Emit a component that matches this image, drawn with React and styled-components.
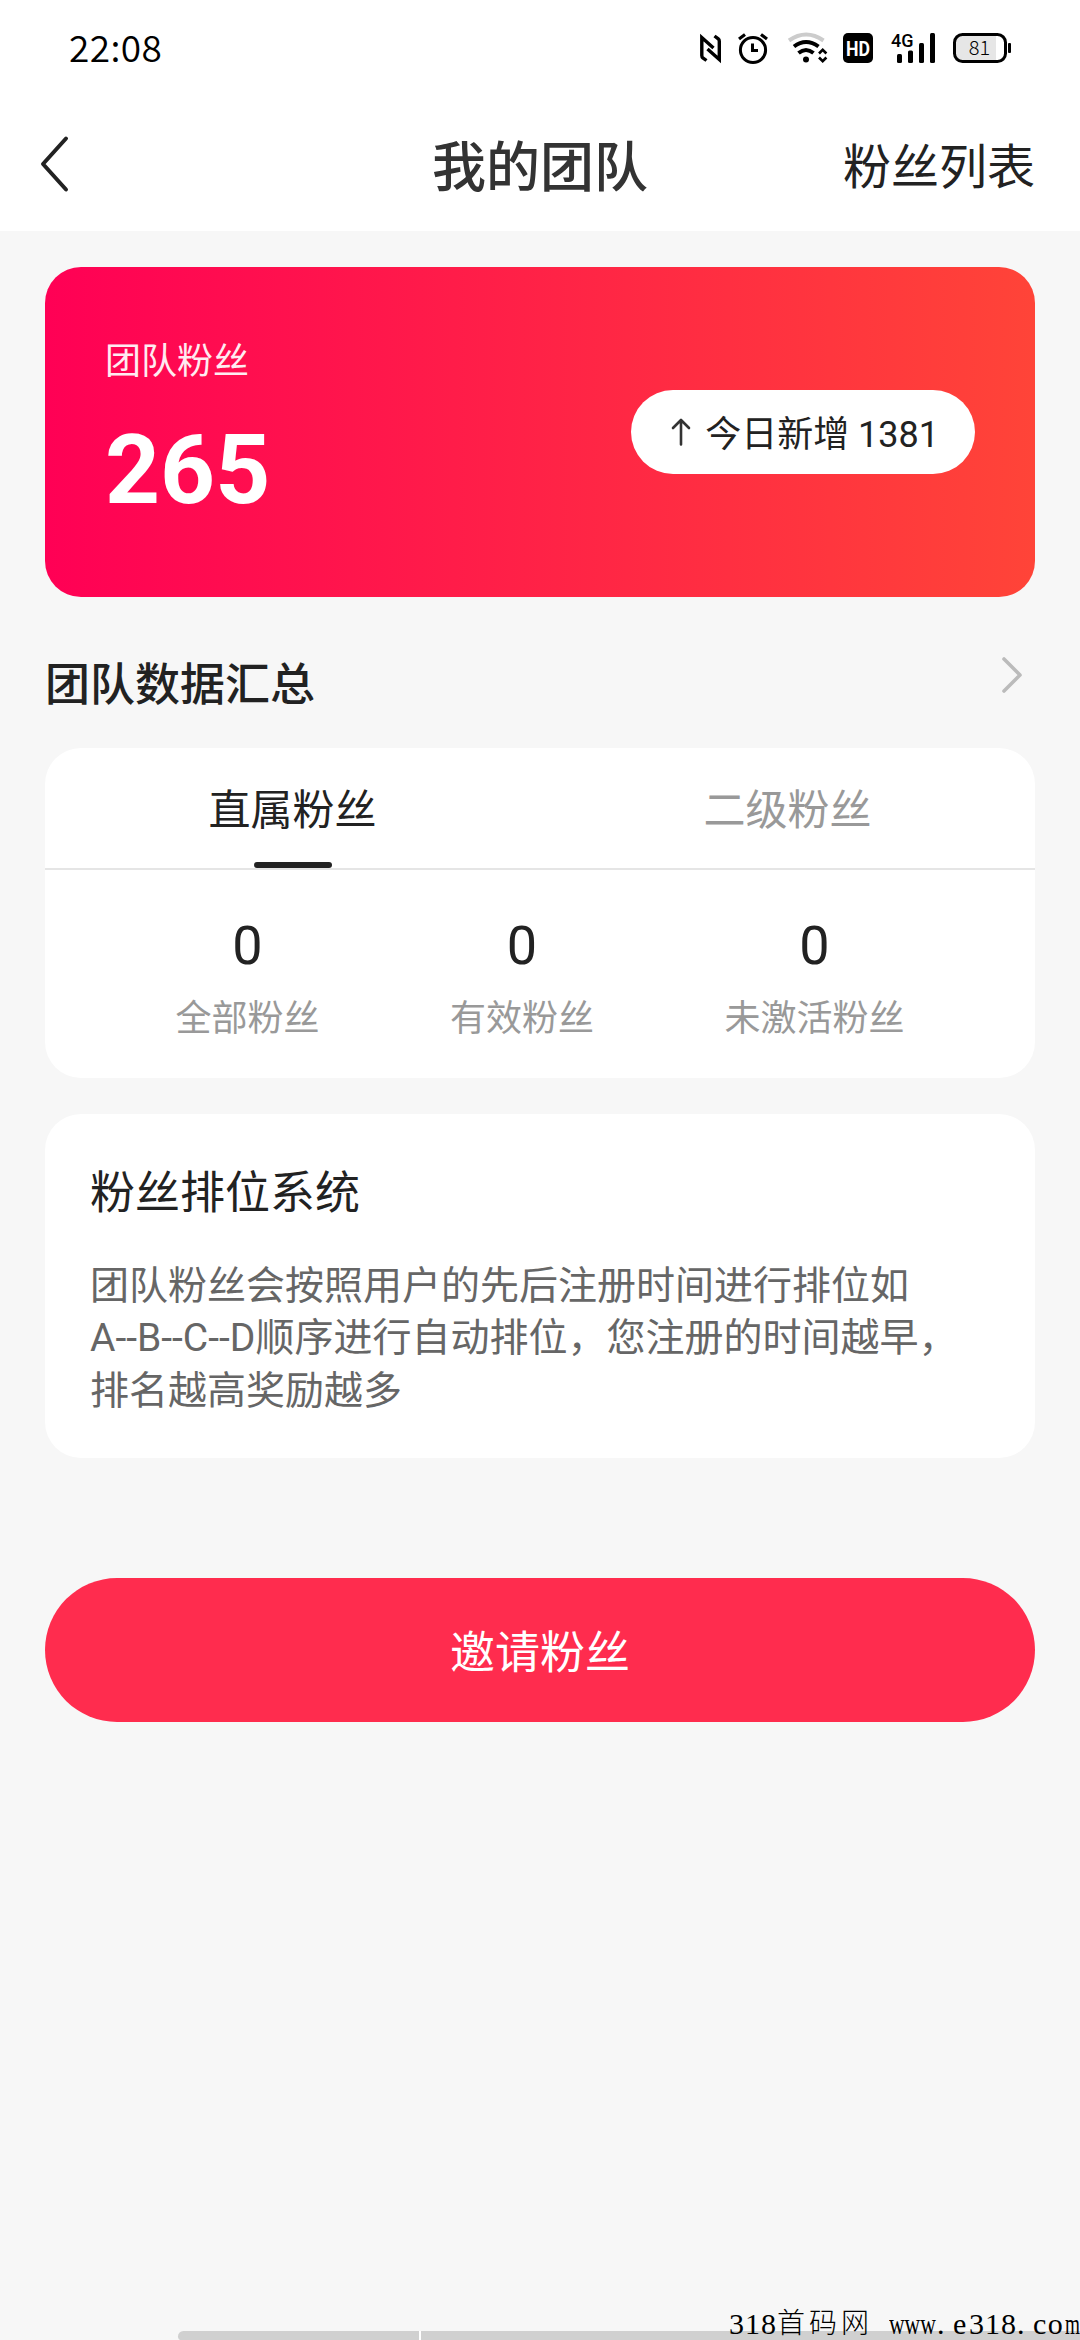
import React from 'react';
import styled, { createGlobalStyle } from 'styled-components';

const GlobalStyle = createGlobalStyle`
  * { box-sizing: border-box; }
  html, body { margin: 0; padding: 0; background: #f7f7f7; }
  body { font-family: Roboto, 'Noto Sans CJK SC', sans-serif; color: #222; }
`;

const Screen = styled.main`
  position: relative;
  width: 1080px;
  height: 2340px;
  overflow: hidden;
  background: #f7f7f7;
`;

const Header = styled.header`
  height: 231px;
  background: #fff;
`;

const StatusBar = styled.div`
  height: 99px;
  padding: 0 63px 3px 69px;
  display: flex;
  align-items: center;
  justify-content: space-between;
  color: #000;
`;

const Clock = styled.span`
  margin-bottom: 5px;
  font: 350 37px/48px 'Noto Sans CJK SC', sans-serif;
  letter-spacing: 0.4px;
`;

const StatusIcons = styled.svg`
  display: block;
  width: 320px;
  height: 40px;
`;

const NavBar = styled.nav`
  height: 132px;
  padding: 6px 45px 0 40px;
  display: grid;
  grid-template-columns: 200px 1fr 195px;
  align-items: center;
`;

const BackIcon = styled.svg`
  display: block;
  width: 30px;
  height: 58px;
  margin-bottom: 8px;
`;

const PageTitle = styled.h1`
  margin: 0;
  padding-top: 1px;
  font-size: 54px;
  line-height: 64px;
  font-weight: 500;
  color: #333;
  text-align: center;
`;

const NavLink = styled.span`
  font-size: 48px;
  line-height: 60px;
  text-align: right;
  white-space: nowrap;
`;

const Content = styled.div`
  padding: 36px 45px 0;
`;

const Hero = styled.section`
  height: 330px;
  padding: 0 60px;
  border-radius: 36px;
  background: linear-gradient(90deg, #ff0055, #ff4438);
  display: flex;
  align-items: center;
  justify-content: space-between;
`;

const HeroStat = styled.div`
  align-self: flex-start;
  margin-top: 71px;
  display: flex;
  flex-direction: column;
  gap: 36px;
  color: #fff;
`;

const HeroLabel = styled.span`
  font-size: 36px;
  line-height: 48px;
  opacity: 0.92;
`;

const HeroNumber = styled.strong`
  font-size: 96px;
  line-height: 96px;
  font-weight: 700;
`;

const TodayPill = styled.div`
  width: 344px;
  height: 84px;
  padding: 5px 36px 0 38px;
  border-radius: 42px;
  background: #fff;
  display: flex;
  align-items: center;
  justify-content: space-between;
  font-size: 36px;
  line-height: 48px;
  white-space: nowrap;
`;

const ArrowIcon = styled.svg`
  display: block;
  width: 24px;
  height: 30px;
  margin-bottom: 6px;
`;

const SectionHeader = styled.div`
  height: 151px;
  padding: 5px 11px 0 0;
  display: flex;
  align-items: center;
  justify-content: space-between;
`;

const SectionTitle = styled.h2`
  margin: 0;
  padding-top: 22px;
  font-size: 45px;
  line-height: 56px;
  font-weight: 500;
`;

const ChevronIcon = styled.svg`
  display: block;
  width: 24px;
  height: 40px;
`;

const Card = styled.section`
  height: ${({ $height }) => $height}px;
  border-radius: 36px;
  background: #fff;
`;

const Tabs = styled.div`
  height: 122px;
  display: flex;
  border-bottom: 2px solid #e5e5e5;
`;

const Tab = styled.div`
  flex: 1;
  display: flex;
  flex-direction: column;
  align-items: center;
  color: ${({ $active }) => ($active ? '#222' : '#999')};

  &::after {
    content: '';
    width: 78px;
    height: 6px;
    border-radius: 3px;
    background: ${({ $active }) => ($active ? '#222' : 'transparent')};
  }
`;

const TabLabel = styled.span`
  flex: 1;
  padding-top: 12px;
  display: flex;
  align-items: center;
  font-size: 42px;
  line-height: 54px;
`;

const Stats = styled.div`
  padding-top: 49px;
  display: flex;
  justify-content: space-evenly;
`;

const Stat = styled.div`
  display: flex;
  flex-direction: column;
  align-items: center;
  gap: 22px;
`;

const StatValue = styled.span`
  font-size: 54px;
  line-height: 54px;
`;

const StatLabel = styled.span`
  font-size: 36px;
  line-height: 48px;
  color: #999;
`;

const InfoCard = styled(Card)`
  margin-top: 36px;
  padding: 53px 45px 0;
`;

const InfoTitle = styled.h3`
  margin: 0;
  font-size: 45px;
  line-height: 54px;
  font-weight: 400;
`;

const InfoText = styled.p`
  margin: 39px 0 0;
  font-size: 39px;
  line-height: 52.4px;
  color: #666;
`;

const InviteButton = styled.button`
  display: block;
  width: 100%;
  height: 144px;
  margin-top: 120px;
  padding: 7px 0 0;
  border: 0;
  border-radius: 72px;
  background: #ff2c4e;
  color: #fff;
  font: 400 45px/56px Roboto, 'Noto Sans CJK SC', sans-serif;
`;

const BottomTrack = styled.div`
  position: absolute;
  left: 178px;
  right: 0;
  bottom: 0;
  height: 9px;
  display: grid;
  grid-template-columns: 241px 1fr;
  gap: 2px;
`;

const TrackPart = styled.span`
  background: #d0d0d0;
  border-radius: ${({ $rounded }) => ($rounded ? '6px 0 0 4px' : '0')};
  box-shadow: ${({ $rounded }) => ($rounded ? '2px 0 0 #fff' : 'none')};
`;

const SiteMark = styled.div`
  position: absolute;
  right: 0;
  bottom: 0;
  width: 351px;
  height: 33px;
  display: flex;
  font: 400 30px/33px 'Liberation Serif', 'Noto Sans CJK SC', serif;
  color: #000;
  white-space: pre;
`;

const MarkPart = styled.span`
  flex: none;
  width: ${({ $cells }) => $cells * 16}px;
  letter-spacing: ${({ $gap = 0 }) => $gap}px;
`;

const MarkName = styled(MarkPart)`
  font-size: 28px;
  font-weight: 300;
`;

const Squeezed = styled.span`
  display: inline-block;
  transform: scaleX(${({ $by }) => $by});
  transform-origin: left center;
`;

const stats = [
  { value: 0, label: '全部粉丝' },
  { value: 0, label: '有效粉丝' },
  { value: 0, label: '未激活粉丝' },
];

function StatusBarIcons() {
  return (
    <StatusIcons viewBox="697 28 320 40" fill="none" stroke="#000">
      {/* NFC */}
      <path d="M706.500 60.500L702.800 57.800Q701.800 57 701.800 55.500V37.500L713.500 48" strokeWidth="3.400" />
      <path d="M714.500 36L718.300 38.800Q719.300 39.600 719.300 41.200V59.500L707.500 49" strokeWidth="3.400" />
      {/* Alarm clock */}
      <circle cx="753" cy="50" r="12.6" strokeWidth="3" />
      <path d="M752.5 43.5V50.5H758" strokeWidth="3" />
      <path d="M739 39L745 34.5M767 39L761 34.5" strokeWidth="3.2" />
      {/* Wi-Fi */}
      <path d="M789 40.5Q806 28.5 823.500 40.500" stroke="#ccc" strokeWidth="4" />
      <path d="M794 46.500Q806 37.500 818.500 46.500" strokeWidth="4" />
      <path d="M798.500 53Q806 47 813.500 53" strokeWidth="4" />
      <circle cx="806" cy="59.5" r="3" fill="#000" stroke="none" />
      <path d="M819 53.500L822.700 49.800L826.400 53.500M819 57.500L822.700 61.200L826.400 57.500" strokeWidth="2.600" />
      {/* HD badge */}
      <rect x="843" y="33" width="30" height="30" rx="5" fill="#000" stroke="none" />
      <text x="858" y="55.500" textAnchor="middle" fontFamily="Roboto, sans-serif" fontWeight="700" fontSize="21" textLength="24" lengthAdjust="spacingAndGlyphs" fill="#fff" stroke="none">HD</text>
      {/* Signal */}
      <text x="891" y="47" fontFamily="Roboto, sans-serif" fontWeight="500" fontSize="19" textLength="22.500" lengthAdjust="spacingAndGlyphs" fill="#000" stroke="none">4G</text>
      <g fill="#000" stroke="none">
        <rect x="897" y="54" width="5" height="9" rx="1.500" />
        <rect x="908" y="50.500" width="5" height="12.500" rx="1.500" />
        <rect x="919" y="43" width="5" height="20" rx="1.500" />
        <rect x="930" y="33" width="5" height="30" rx="1.500" />
      </g>
      {/* Battery */}
      <rect x="956" y="36" width="40" height="24" fill="#e6e6e6" stroke="none" />
      <rect x="954.500" y="34.500" width="51" height="27" rx="8" strokeWidth="3" />
      <rect x="1008" y="43" width="3" height="10" rx="1" fill="#000" stroke="none" />
      <text x="979.500" y="54.500" textAnchor="middle" fontFamily="'Noto Sans CJK SC', sans-serif" fontWeight="300" fontSize="20" fill="#000" stroke="none">81</text>
    </StatusIcons>
  );
}

export default function App() {
  return (
    <>
      <GlobalStyle />
      <Screen>
        <Header>
          <StatusBar>
            <Clock>22:08</Clock>
            <StatusBarIcons />
          </StatusBar>
          <NavBar>
            <BackIcon viewBox="0 0 30 58" fill="none" stroke="#222" strokeWidth="4" strokeLinecap="round" strokeLinejoin="round">
              <path d="M26 3.500L3 29L26 54.500" />
            </BackIcon>
            <PageTitle>我的团队</PageTitle>
            <NavLink>粉丝列表</NavLink>
          </NavBar>
        </Header>

        <Content>
          <Hero>
            <HeroStat>
              <HeroLabel>团队粉丝</HeroLabel>
              <HeroNumber>265</HeroNumber>
            </HeroStat>
            <TodayPill>
              <ArrowIcon viewBox="0 0 24 30" fill="none" stroke="#333" strokeWidth="2.600" strokeLinecap="round" strokeLinejoin="round">
                <path d="M12 27.500V3M4 11L12 3L20 11" />
              </ArrowIcon>
              <span>今日新增 1381</span>
            </TodayPill>
          </Hero>

          <SectionHeader>
            <SectionTitle>团队数据汇总</SectionTitle>
            <ChevronIcon viewBox="0 0 24 40" fill="none" stroke="#bbb" strokeWidth="3.600" strokeLinecap="round" strokeLinejoin="round">
              <path d="M4 4L20 20L4 36" />
            </ChevronIcon>
          </SectionHeader>

          <Card $height={330}>
            <Tabs>
              <Tab $active>
                <TabLabel>直属粉丝</TabLabel>
              </Tab>
              <Tab>
                <TabLabel>二级粉丝</TabLabel>
              </Tab>
            </Tabs>
            <Stats>
              {stats.map(({ value, label }) => (
                <Stat key={label}>
                  <StatValue>{value}</StatValue>
                  <StatLabel>{label}</StatLabel>
                </Stat>
              ))}
            </Stats>
          </Card>

          <InfoCard $height={344}>
            <InfoTitle>粉丝排位系统</InfoTitle>
            <InfoText>
              团队粉丝会按照用户的先后注册时间进行排位如
              <br />
              A--B--C--D顺序进行自动排位，您注册的时间越早，
              <br />
              排名越高奖励越多
            </InfoText>
          </InfoCard>

          <InviteButton>邀请粉丝</InviteButton>
        </Content>

        <BottomTrack>
          <TrackPart $rounded />
          <TrackPart />
        </BottomTrack>
        <SiteMark>
          <MarkPart $cells={3} $gap={1}>318</MarkPart>
          <MarkName $cells={7} $gap={4}>首码网 </MarkName>
          <MarkPart $cells={3}><Squeezed $by={0.72}>www</Squeezed></MarkPart>
          <MarkPart $cells={1}>.</MarkPart>
          <MarkPart $cells={1}>e</MarkPart>
          <MarkPart $cells={3} $gap={1}>318</MarkPart>
          <MarkPart $cells={1}>.</MarkPart>
          <MarkPart $cells={2} $gap={1.5}>co</MarkPart>
          <MarkPart $cells={1}><Squeezed $by={0.64}>m</Squeezed></MarkPart>
        </SiteMark>
      </Screen>
    </>
  );
}
